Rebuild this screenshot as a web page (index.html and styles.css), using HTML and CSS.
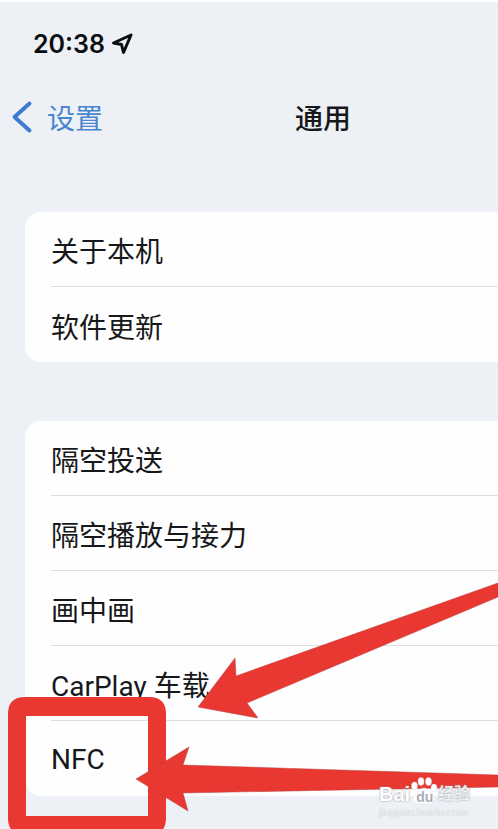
FILE: index.html
```html
<!DOCTYPE html>
<html lang="zh-CN">
<head>
    <meta charset="UTF-8">
    <meta name="viewport" content="width=device-width, initial-scale=1.0">
    <title>通用</title>
    <link rel="stylesheet" href="styles.css">
</head>
<body>
    <div class="screen">
        <div class="status-bar">
            <span>20:38</span>
            <!-- location arrow -->
            <svg class="location" width="22" height="22" viewBox="0 0 22 22" aria-hidden="true">
                <path d="M20 2 L2.5 10 L10.5 11.5 L12.5 19.5 Z"/>
            </svg>
        </div>

        <header class="nav-bar">
            <a class="back" href="#">
                <svg class="chevron" width="22" height="34" viewBox="0 0 22 34" aria-hidden="true">
                    <path d="M18.5 3.5 L3.5 17 L18.5 30.5"/>
                </svg>
                <span>设置</span>
            </a>
            <h1>通用</h1>
        </header>

        <main>
            <ul class="group">
                <li><a href="#">关于本机</a></li>
                <li><a href="#">软件更新</a></li>
            </ul>
            <ul class="group">
                <li><a href="#">隔空投送</a></li>
                <li><a href="#">隔空播放与接力</a></li>
                <li><a href="#">画中画</a></li>
                <li><a href="#">CarPlay 车载</a></li>
                <li><a href="#">NFC</a></li>
            </ul>
        </main>

        <!-- red frame and arrows pointing at the NFC row -->
        <svg class="marks" width="498" height="840" viewBox="0 0 498 840" aria-hidden="true">
            <path class="frame" fill-rule="evenodd" d="M25 697 H149 Q166 697 166 714 V818 Q166 835 149 835 H25 Q8 835 8 818 V714 Q8 697 25 697 Z M26 716 V816 H148 V716 Z"/>
            <path class="arrow" d="M198 707 L235 658 L236 676 L498 583 V597 L247 703 L258 718 Z"/>
            <path class="arrow" d="M136 779 L189 747 L183 765 L498 775 V787 L183 793 L188 811 Z"/>
        </svg>

        <!-- watermark -->
        <div class="watermark">
            <div class="brand">
                <span>Bai</span>
                <span class="paw">
                    <svg width="28" height="29" viewBox="0 0 28 29" aria-hidden="true">
                        <ellipse cx="4.5" cy="9" rx="3" ry="4"/>
                        <ellipse cx="11" cy="4.5" rx="3" ry="4"/>
                        <ellipse cx="18.5" cy="4.5" rx="3" ry="4"/>
                        <ellipse cx="24" cy="11" rx="3" ry="4"/>
                        <path d="M14 11 C18 11 19 15 22 17 C27 21 25 27 20 27 H8 C3 27 1 21 6 17 C9 15 10 11 14 11 Z"/>
                    </svg>
                    <span class="du">du</span>
                </span>
                <span class="jingyan">经验</span>
            </div>
            <div class="site">jingyan.baidu.com</div>
        </div>
    </div>
</body>
</html>
```

FILE: styles.css
```css
* {
    box-sizing: border-box;
}
body {
    margin: 0;
    font-family: Roboto, "Noto Sans CJK SC", sans-serif;
    font-size: 28px;
    color: #17181a;
    background-color: #edf1f6;
}
a {
    color: inherit;
    text-decoration: none;
}
.screen {
    position: relative;
    height: 100vh;
    min-height: 829px;
    overflow: hidden;
    border-top: 2px solid #fafcfd;
}
.status-bar {
    display: flex;
    align-items: center;
    gap: 6px;
    height: 84px;
    padding-left: 33px;
    font-family: Inter, sans-serif;
    font-size: 25px;
    font-weight: 600;
    color: #0c0d0f;
}
.location path {
    fill: none;
    stroke: #0c0d0f;
    stroke-width: 3;
    stroke-linejoin: round;
}
.nav-bar {
    display: flex;
    align-items: center;
    gap: 192px;
    height: 62px;
    padding-left: 11px;
    margin-bottom: 64px;
}
.back {
    display: flex;
    align-items: center;
    gap: 14px;
    color: #4a86cf;
}
.chevron path {
    fill: none;
    stroke: #3f7bd3;
    stroke-width: 4;
    stroke-linecap: round;
    stroke-linejoin: round;
}
.nav-bar h1 {
    margin: 0;
    font-size: 28px;
    font-weight: 500;
}
.group {
    list-style: none;
    margin: 0 0 59px 25px;
    padding: 0 0 0 26px;
    background: #fefefe;
    border-radius: 16px 0 0 16px;
}
.group li {
    height: 75px;
    border-bottom: 1px solid #dedfe1;
}
.group li:last-child {
    border-bottom: none;
}
.group a {
    display: flex;
    align-items: center;
    height: 100%;
    padding-top: 2px;
}

/* annotations */
.marks {
    position: absolute;
    top: -2px;
    left: 0;
    pointer-events: none;
}
.frame {
    fill: #e93732;
}
.arrow {
    fill: #e93732;
    stroke: #b8403e;
    stroke-width: 0.5;
}

/* watermark */
.watermark {
    position: absolute;
    right: 27px;
    bottom: 11px;
    width: 92px;
    font-family: "Liberation Sans", "Noto Sans CJK SC", sans-serif;
    color: #fff;
    text-shadow: 0 0 2px #8b9198;
}
.brand {
    display: flex;
    align-items: flex-end;
    height: 30px;
    font-size: 20px;
    font-weight: bold;
    line-height: 24px;
}
.paw {
    position: relative;
    flex: none;
    width: 28px;
    height: 29px;
}
.paw svg {
    display: block;
    fill: #fff;
    stroke: #d5d8dc;
    stroke-width: 0.5;
}
.du {
    position: absolute;
    left: 6px;
    bottom: 2px;
    font-size: 14px;
    line-height: 14px;
    color: #a9aeb4;
    text-shadow: none;
}
.jingyan {
    font-size: 16px;
    color: #eef0f2;
}
.site {
    font-size: 11px;
    line-height: 12px;
    color: #f3f5f8;
    text-shadow: 0 0 1px #a4a9b0;
}
```
